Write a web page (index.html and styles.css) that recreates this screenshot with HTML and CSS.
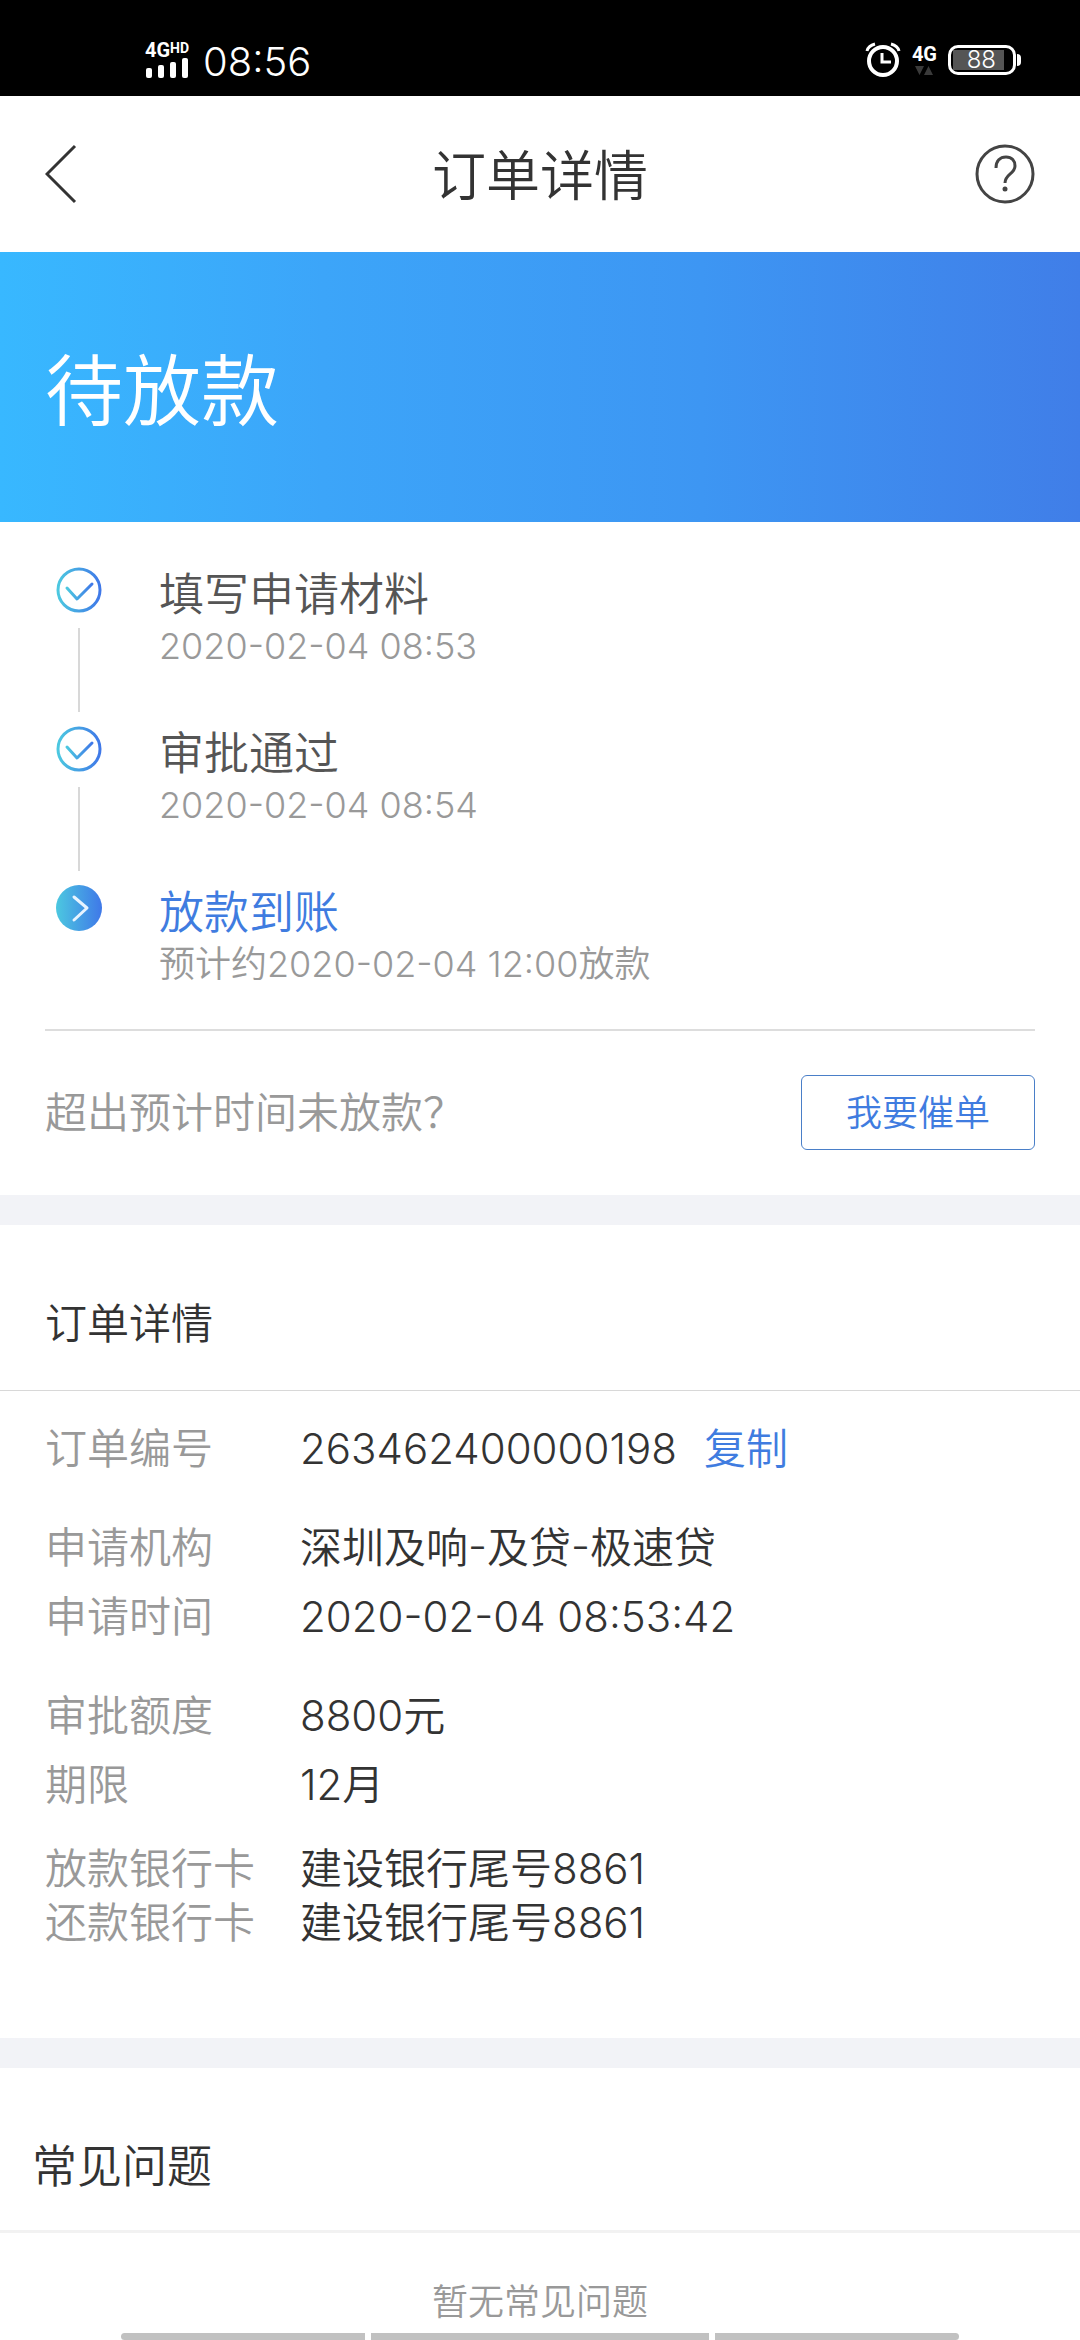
FILE: index.html
```html
<!DOCTYPE html>
<html lang="zh-CN">
<head>
<meta charset="UTF-8">
<meta name="viewport" content="width=device-width, initial-scale=1.0">
<title>订单详情</title>
<link rel="stylesheet" href="styles.css">
</head>
<body>
    <div class="status-bar">
        <div class="status-left">
            <div class="signal">
                <div class="signal-text">4G<span class="signal-hd">HD</span></div>
                <svg width="44" height="20" viewBox="0 0 44 20" fill="#fff">
                    <rect x="1" y="10" width="6" height="10" rx="2"/>
                    <rect x="13" y="7" width="6" height="13" rx="2"/>
                    <rect x="25" y="4" width="6" height="16" rx="2"/>
                    <rect x="37" y="0" width="6" height="20" rx="2"/>
                </svg>
            </div>
            <span class="clock">08:56</span>
        </div>
        <div class="status-right">
            <svg width="36" height="36" viewBox="0 0 36 36" fill="none" stroke="#fff">
                <circle cx="18" cy="19" r="14" stroke-width="4"/>
                <path d="M17 11v9h9" stroke-width="3"/>
                <path d="M2 9c1-4 4-6 8-7M34 9c-1-4-4-6-8-7" stroke-width="3"/>
            </svg>
            <div class="network">
                <span>4G</span>
                <svg width="18" height="9" viewBox="0 0 18 9" fill="#3a3a3a"><path d="M0 0h9l-4.500 9zM9 9h9l-4.500-9z"/></svg>
            </div>
            <div class="battery"><span class="battery-level">88</span></div>
        </div>
    </div>

    <header class="header">
        <button class="icon-btn" aria-label="返回">
            <svg width="60" height="60" viewBox="0 0 60 60" fill="none" stroke="#333" stroke-width="3"><path d="M30 2L2 30l28 28"/></svg>
        </button>
        <h1>订单详情</h1>
        <button class="icon-btn" aria-label="帮助">
            <svg width="60" height="60" viewBox="0 0 60 60" fill="none" stroke="#444" stroke-width="3">
                <circle cx="30" cy="30" r="28"/>
                <path d="M21 24c0-7 4-11 10-11s9 4 9 9c0 8-10 8-10 17"/>
                <circle cx="30" cy="45" r="2.500" fill="#444" stroke="none"/>
            </svg>
        </button>
    </header>

    <div class="banner">待放款</div>

    <section class="progress">
        <svg class="defs" width="0" height="0">
            <linearGradient id="ring"><stop offset="0" stop-color="#4cc8e0"/><stop offset="1" stop-color="#3f78e8"/></linearGradient>
        </svg>
        <ol class="steps">
            <li class="step">
                <div class="step-mark">
                    <svg width="46" height="46" viewBox="0 0 46 46" fill="none" stroke="url(#ring)" stroke-width="3" stroke-linecap="round" stroke-linejoin="round">
                        <circle cx="23" cy="23" r="21"/>
                        <path d="M11 21l10 11 15-15"/>
                    </svg>
                </div>
                <div>
                    <h3>填写申请材料</h3>
                    <p>2020-02-04 08:53</p>
                </div>
            </li>
            <li class="step">
                <div class="step-mark">
                    <svg width="46" height="46" viewBox="0 0 46 46" fill="none" stroke="url(#ring)" stroke-width="3" stroke-linecap="round" stroke-linejoin="round">
                        <circle cx="23" cy="23" r="21"/>
                        <path d="M11 21l10 11 15-15"/>
                    </svg>
                </div>
                <div>
                    <h3>审批通过</h3>
                    <p>2020-02-04 08:54</p>
                </div>
            </li>
            <li class="step active">
                <div class="step-mark">
                    <svg width="46" height="46" viewBox="0 0 46 46" fill="none">
                        <circle cx="23" cy="23" r="23" fill="url(#ring)"/>
                        <path d="M18 12l13 11-13 12" stroke="#e8f4ff" stroke-width="3" stroke-linecap="round" stroke-linejoin="round"/>
                    </svg>
                </div>
                <div>
                    <h3>放款到账</h3>
                    <p>预计约2020-02-04 12:00放款</p>
                </div>
            </li>
        </ol>
        <div class="remind">
            <span>超出预计时间未放款？</span>
            <button class="remind-btn">我要催单</button>
        </div>
    </section>

    <section class="detail">
        <h2>订单详情</h2>
        <dl class="info">
            <div class="group">
                <div class="row"><dt>订单编号</dt><dd>263462400000198<a class="copy" href="#">复制</a></dd></div>
            </div>
            <div class="group">
                <div class="row"><dt>申请机构</dt><dd>深圳及响-及贷-极速贷</dd></div>
                <div class="row"><dt>申请时间</dt><dd>2020-02-04 08:53:42</dd></div>
            </div>
            <div class="group">
                <div class="row"><dt>审批额度</dt><dd>8800元</dd></div>
                <div class="row"><dt>期限</dt><dd>12月</dd></div>
            </div>
            <div class="group cards">
                <div class="row"><dt>放款银行卡</dt><dd>建设银行尾号8861</dd></div>
                <div class="row"><dt>还款银行卡</dt><dd>建设银行尾号8861</dd></div>
            </div>
        </dl>
    </section>

    <section class="faq">
        <h2>常见问题</h2>
        <p>暂无常见问题</p>
    </section>

    <!-- system navigation strip, always on top -->
    <div class="nav-strip"><i></i><i class="wide"></i><i></i></div>
</body>
</html>
```
FILE: styles.css
```css
* {
    box-sizing: border-box;
}
body {
    margin: 0;
    background-color: #fff;
    color: #333;
    font-family: Inter, "Noto Sans CJK SC", sans-serif;
    font-feature-settings: "case";
    font-weight: 350;
    font-size: 42px;
    line-height: 54px;
}
h1, h2, h3, p, ol, dl, dd {
    margin: 0;
    padding: 0;
    font-weight: 350;
}
svg {
    display: block;
}
button {
    font: inherit;
    background: none;
    cursor: pointer;
}

/* status bar */
.status-bar {
    display: flex;
    justify-content: space-between;
    height: 96px;
    padding: 24px 59px 0 145px;
    background-color: #000;
    color: #fff;
}
.status-left, .status-right {
    display: flex;
    align-items: center;
}
.status-left {
    gap: 14px;
}
.status-right {
    gap: 11px;
}
.signal-text, .network {
    font-family: Roboto, sans-serif;
    font-size: 20px;
    line-height: 16px;
    font-weight: 700;
}
.signal-text {
    display: flex;
    align-items: flex-start;
}
.signal-hd {
    font-size: 14px;
    line-height: 12px;
}
.clock {
    font-size: 40px;
    padding-top: 4px;
}
.network {
    display: flex;
    flex-direction: column;
    align-items: center;
    gap: 4px;
}
.battery {
    position: relative;
    width: 68px;
    height: 30px;
    padding: 2px;
    border: 3px solid #fff;
    border-radius: 10px;
    margin-right: 5px;
}
.battery::after {
    content: "";
    position: absolute;
    right: -8px;
    top: 6px;
    width: 4px;
    height: 12px;
    border-radius: 0 4px 4px 0;
    background-color: #fff;
}
.battery-level {
    display: block;
    width: 88%;
    height: 20px;
    background-color: #555;
    font-size: 24px;
    line-height: 20px;
    text-align: right;
    padding-right: 8px;
}

/* header */
.header {
    display: flex;
    align-items: center;
    justify-content: space-between;
    height: 156px;
    padding: 0 45px;
}
.header h1 {
    padding-top: 5px;
    font-size: 54px;
    line-height: 72px;
}
.icon-btn {
    padding: 0;
    border: none;
}
.banner {
    padding: 89px 45px 79px;
    background: linear-gradient(to right, #38b8ff, #3ca5f9 30%, #3d96f3 65%, #407ee8);
    color: #fff;
    font-size: 78px;
    line-height: 102px;
}

/* progress */
.progress {
    padding: 45px 45px;
    border-bottom: 30px solid #f2f3f7;
}
.defs {
    position: absolute;
}
.steps {
    list-style: none;
    padding-bottom: 42px;
    border-bottom: 2px solid #ddd;
}
.step {
    display: flex;
    gap: 57px;
}
.step-mark {
    display: flex;
    flex-direction: column;
    align-items: center;
    padding-left: 11px;
}
.step:not(:last-child) {
    height: 159px;
}
.step:not(:last-child) .step-mark::after {
    content: "";
    width: 2px;
    height: 84px;
    margin-top: 15px;
    background-color: #d8d8d8;
}
.step h3 {
    font-size: 45px;
    line-height: 56px;
    color: #555;
}
.step p {
    font-size: 36px;
    line-height: 46px;
    color: #999;
}
.step.active h3 {
    color: #3f7ce0;
}
.remind {
    display: flex;
    align-items: center;
    justify-content: space-between;
    padding-top: 44px;
    color: #999;
}
.remind-btn {
    width: 234px;
    height: 75px;
    padding: 0;
    border: 1px solid #4a7fc8;
    border-radius: 6px;
    color: #3f7ce0;
    font-size: 36px;
}

/* order detail */
.detail {
    border-bottom: 30px solid #f2f3f7;
}
.detail h2 {
    padding: 72px 45px 39px;
    border-bottom: 1px solid #d8d8d8;
    font-size: 42px;
}
.info {
    padding: 31px 45px 88px;
}
.group {
    display: flex;
    flex-direction: column;
    gap: 15px;
    margin-bottom: 45px;
}
.group:nth-child(3) {
    margin-bottom: 30px;
}
.group.cards {
    gap: 0;
    margin-bottom: 0;
}
.row {
    display: flex;
}
.row dt {
    width: 255px;
    color: #999;
}
.copy {
    margin-left: 27px;
    color: #3f7ce0;
    text-decoration: none;
}

/* faq */
.faq h2 {
    padding: 72px 32px 36px;
    border-bottom: 3px solid #f2f2f2;
    font-size: 45px;
}
.faq p {
    padding-top: 45px;
    color: #999;
    font-size: 36px;
    line-height: 48px;
    text-align: center;
}

.nav-strip {
    position: fixed;
    left: 0;
    right: 0;
    bottom: 0;
    display: flex;
    gap: 6px;
    padding: 0 121px;
}
.nav-strip i {
    flex: 244;
    height: 7px;
    background-color: #c1c1c1;
}
.nav-strip .wide {
    flex: 338;
}
.nav-strip i:first-child {
    border-radius: 4px 0 0 4px;
}
.nav-strip i:last-child {
    border-radius: 0 4px 4px 0;
}
```
